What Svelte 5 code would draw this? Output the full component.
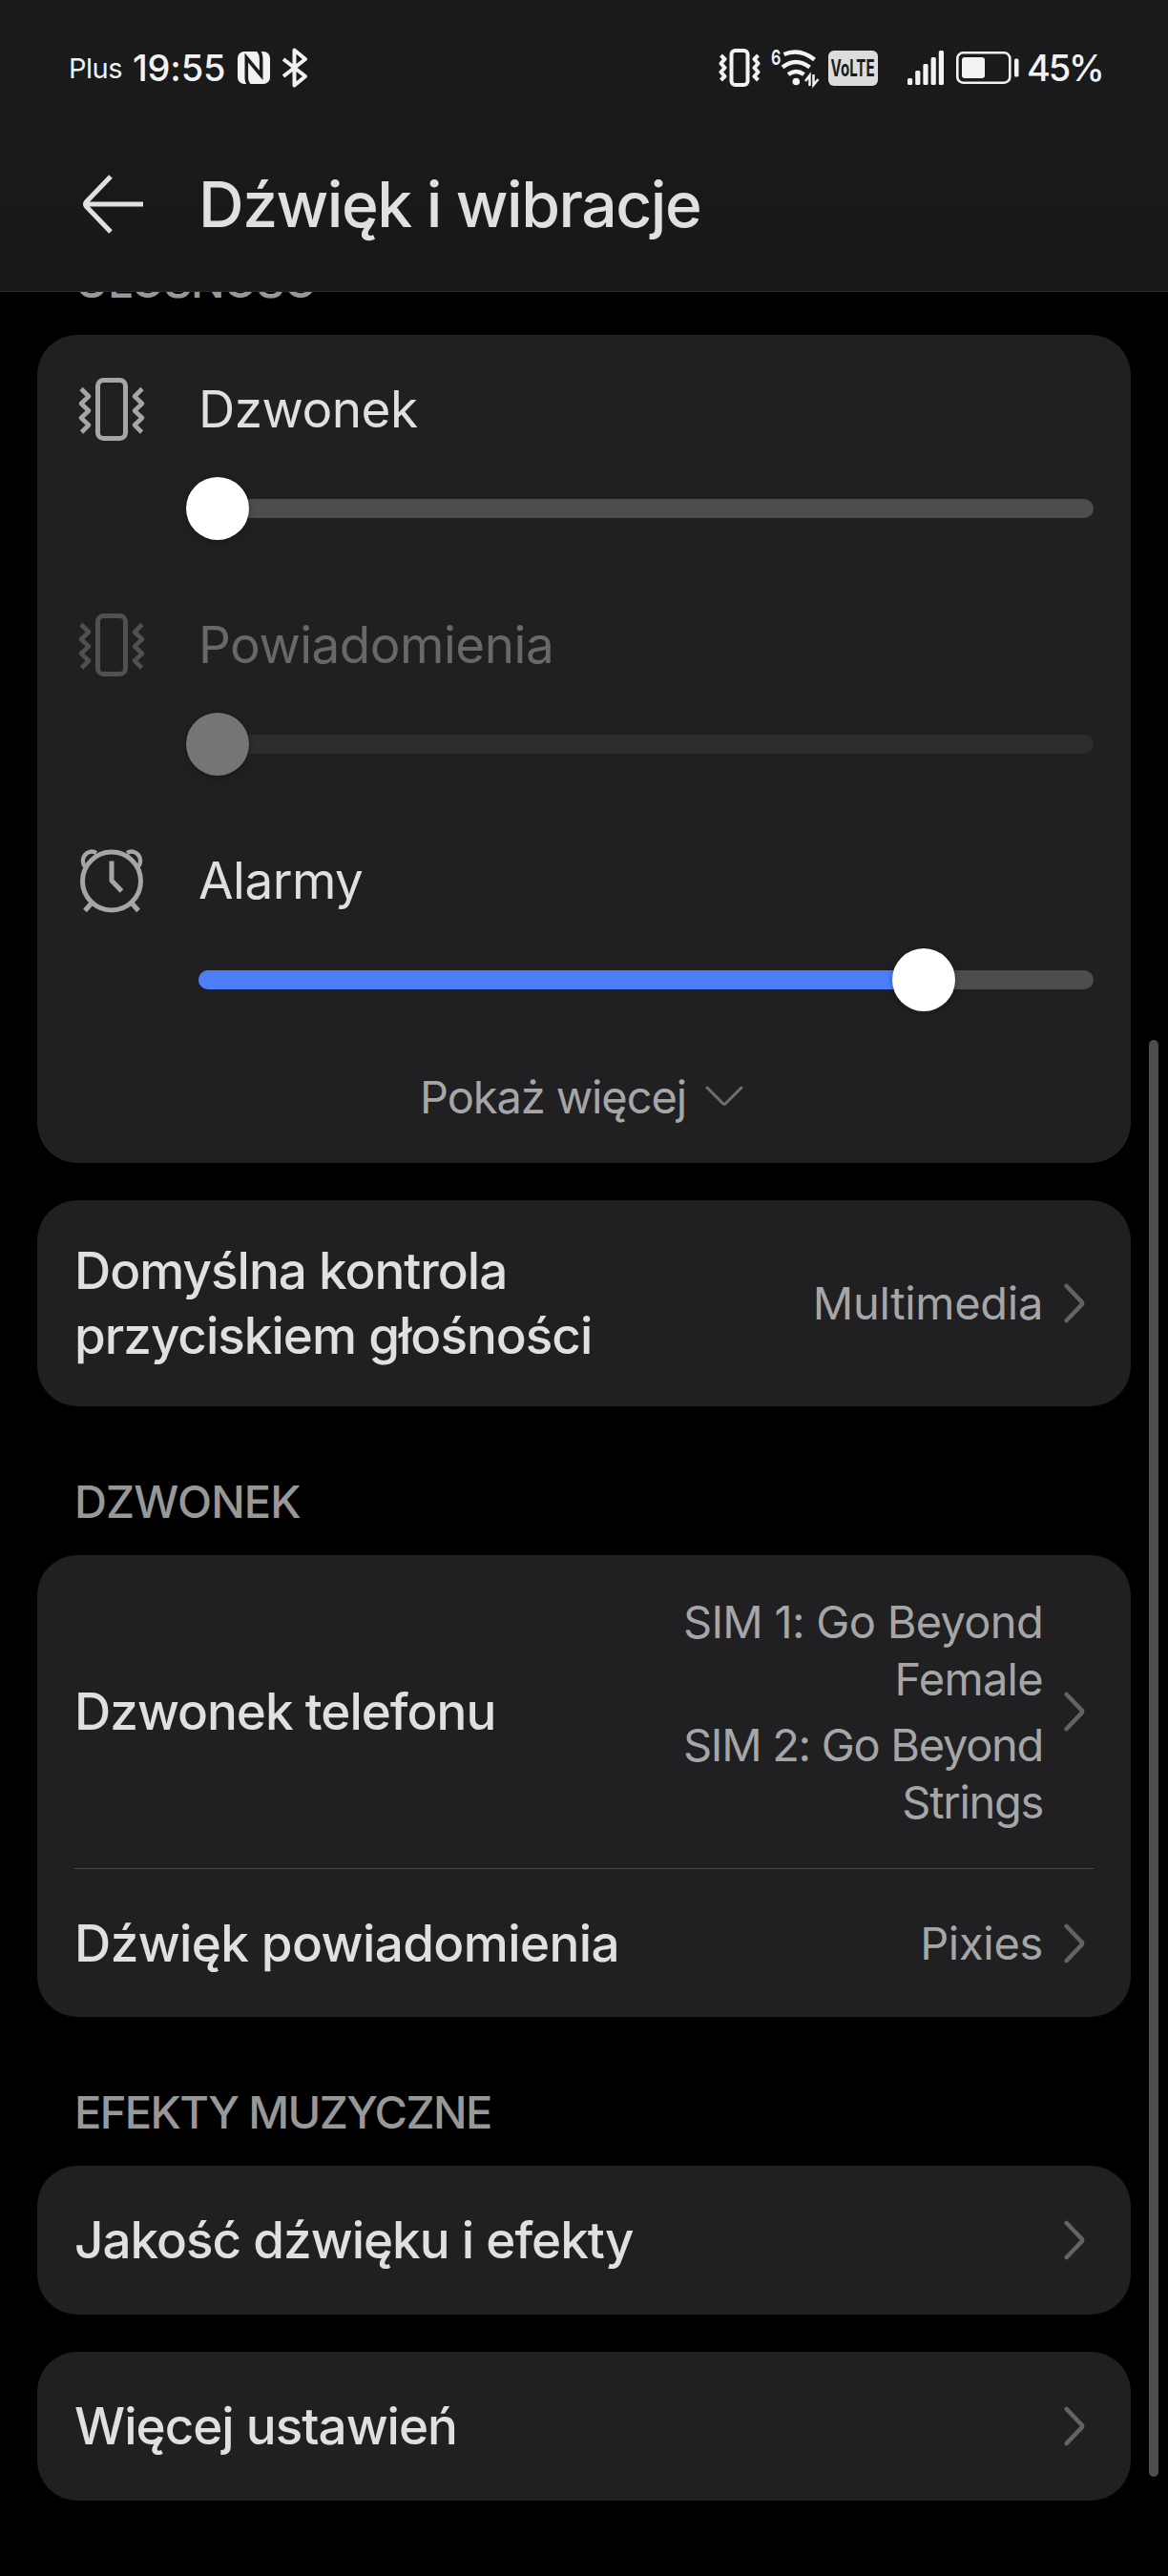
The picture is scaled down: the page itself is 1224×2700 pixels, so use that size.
<script>
  const sliders = [
    { name: 'Dzwonek', icon: 'vibrate', value: 0, disabled: false },
    { name: 'Powiadomienia', icon: 'vibrate', value: 0, disabled: true },
    { name: 'Alarmy', icon: 'alarm', value: 82.4, disabled: false },
  ];

  // Signal bar tops, from the lowest bar to the highest
  const bars = [29, 21, 14, 7, 0];
</script>

{#snippet vibrate()}
  <svg class="icon" viewBox="0 0 72 68" fill="none" stroke="currentColor" stroke-width="5">
    <rect x="21.5" y="3.5" width="29" height="61" rx="6" />
    <g stroke-width="4.6" stroke-linejoin="round">
      <path d="M4 12.500l8 8-8 7.500 8 7.500-8 7.500 8 7.500-7.500 7.500" />
      <path d="M68 12.500l-8 8 8 7.500-8 7.500 8 7.500-8 7.500 7.500 7.500" />
    </g>
  </svg>
{/snippet}

{#snippet alarm()}
  <svg class="icon" viewBox="0 0 72 68" fill="none" stroke="currentColor" stroke-width="5">
    <circle cx="36" cy="34.500" r="30.500" />
    <path d="M36 13.500v20.500l10.500 11" stroke-linejoin="round" />
    <path d="M15 57.500l-7 8M57 57.500l7 8" />
    <path d="M8 19.500C2 11.500 10-.5 20 5M64 19.500C70 11.500 62-.5 52 5" stroke-width="4.500" />
  </svg>
{/snippet}

{#snippet chevron()}
  <svg class="chevron" viewBox="0 0 22 42" fill="none" stroke="#636364" stroke-width="4.600" stroke-linecap="round">
    <path d="M2.700 3l15.300 16q2 2 0 4L2.700 39" />
  </svg>
{/snippet}

<div class="screen">
  <header>
    <div class="status">
      <span class="carrier">Plus</span>
      <span class="clock">19:55</span>
      <svg class="nfc" viewBox="0 0 34 34">
        <rect width="34" height="34" rx="7" fill="#f2f2f2" />
        <g fill="none" stroke="#1b1b1b" stroke-width="3.600">
          <path d="M12 35Q9.300 32 9.300 28V6.500L24.700 25V7Q24.700 2 21.500-1" />
        </g>
      </svg>
      <svg class="bluetooth" viewBox="0 0 28 42" fill="none" stroke="#f2f2f2" stroke-width="4" stroke-linejoin="round">
        <path d="M2 12l23 18-11.500 9.500V2.500L25 12 2 30" />
      </svg>

      <svg class="ringer" viewBox="0 0 44 40" fill="none" stroke="#f2f2f2" stroke-width="4">
        <rect x="13.500" y="2" width="17" height="36" rx="4" />
        <path d="M2.500 7l4 4-4 4.500 4 4.500-4 4.500 4 4.500-4 4" stroke-linejoin="round" />
        <path d="M41.500 7l-4 4 4 4.500-4 4.500 4 4.500-4 4.500 4 4" stroke-linejoin="round" />
      </svg>
      <svg class="wifi" viewBox="0 0 52 40">
        <text x="0" y="16.500" class="wifi-gen">6</text>
        <g fill="none" stroke="#f2f2f2" stroke-width="4.500">
          <path d="M13.500 6Q30-1 45.500 11.500" />
          <path d="M12 19.500Q26 8.500 40.500 19.500" />
          <path d="M18 27Q26 21 34.500 27" />
        </g>
        <circle cx="26.300" cy="34.500" r="3.800" fill="#f2f2f2" />
        <path d="M36 34l4.500-6v11M44.500 27v11l5-6" fill="none" stroke="#f2f2f2" stroke-width="2.500" />
      </svg>
      <span class="volte"><span>VoLTE</span></span>
      <svg class="signal" viewBox="0 0 38 36" fill="#f2f2f2">
        {#each bars as top, i}
          <rect x={i * 8.200} y={top} width="5.200" height={36 - top} rx="1.500" />
        {/each}
      </svg>
      <svg class="battery" viewBox="0 0 66 34">
        <rect x="1.300" y="1.300" width="55" height="31.400" rx="6" fill="none" stroke="#f2f2f2" stroke-width="2.600" />
        <rect x="6" y="6" width="24" height="22" rx="3" fill="#f2f2f2" />
        <rect x="61" y="7.500" width="4.500" height="19" rx="1.500" fill="#f2f2f2" />
      </svg>
      <span class="percent">45%</span>
    </div>

    <div class="titlebar">
      <svg class="back" viewBox="0 0 66 62" fill="none" stroke="#e0e0e0" stroke-width="5" stroke-linejoin="round">
        <path d="M64 31H4M30 2L4.500 28.500q-2 2.500 0 5L30 60" />
      </svg>
      <h1>Dźwięk i wibracje</h1>
    </div>
  </header>

  <main>
    <h2 class="scrolled tight">GŁOŚNOŚĆ</h2>
    <section class="card volumes">
      {#each sliders as s}
        <div class="volume" class:disabled={s.disabled}>
          {#if s.icon == 'alarm'}{@render alarm()}{:else}{@render vibrate()}{/if}
          <span class="volume-name">{s.name}</span>
          <div class="slider">
            <div class="track">
              {#if s.value > 0}<div class="fill" style="width: {s.value}%"></div>{/if}
            </div>
            <div class="rail"><div class="thumb" style="left: {s.value}%"></div></div>
          </div>
        </div>
      {/each}
      <div class="more">
        <span>Pokaż więcej</span>
        <svg viewBox="0 0 40 22" fill="none" stroke="#6f6f70" stroke-width="3" stroke-linecap="round">
          <path d="M2 2l16.500 16.500q1.500 1.500 3 0L38 2" />
        </svg>
      </div>
    </section>

    <section class="card control">
      <div class="row">
        <span class="label">Domyślna kontrola<br />przyciskiem głośności</span>
        <span class="value">Multimedia</span>
        {@render chevron()}
      </div>
    </section>

    <h2>DZWONEK</h2>
    <section class="card">
      <div class="row ringtone">
        <span class="label">Dzwonek telefonu</span>
        <div class="sims">
          <p class="value">SIM 1: Go Beyond<br />Female</p>
          <p class="value">SIM 2: Go Beyond<br />Strings</p>
        </div>
        {@render chevron()}
      </div>
      <div class="row divided">
        <span class="label loose">Dźwięk powiadomienia</span>
        <span class="value">Pixies</span>
        {@render chevron()}
      </div>
    </section>

    <h2 class="tight">EFEKTY MUZYCZNE</h2>
    <section class="card">
      <div class="row">
        <span class="label">Jakość dźwięku i efekty</span>
        {@render chevron()}
      </div>
    </section>
    <section class="card">
      <div class="row">
        <span class="label">Więcej ustawień</span>
        {@render chevron()}
      </div>
    </section>
  </main>

  <div class="scrollbar"></div>
</div>

<style>
  :global(body) {
    background: #000;
  }

  .screen {
    position: relative;
    width: 1224px;
    height: 2700px;
    overflow: hidden;
    background: #000;
    color: #e0e0e0;
    font-family: Inter, "Noto Sans", sans-serif;
  }

  h1, h2, p {
    margin: 0;
  }

  svg {
    display: block;
    flex: none;
  }

  header {
    box-sizing: border-box;
    height: 306px;
    border-bottom: 1px solid #2a2a2a;
    background: linear-gradient(#1b1b1b, #181818);
  }

  /* status bar */
  .status {
    display: flex;
    align-items: center;
    height: 142px;
    padding-left: 72px;
    color: #f2f2f2;
    white-space: nowrap;
  }

  .carrier {
    width: 67px;
    font-size: 29px;
    letter-spacing: -0.5px;
  }

  .clock {
    width: 110px;
    font-size: 38px;
    font-weight: 450;
    letter-spacing: -0.2px;
  }

  .nfc {
    width: 34px;
    height: 34px;
  }

  .bluetooth {
    width: 28px;
    height: 42px;
    margin-left: 12px;
  }

  .ringer {
    width: 44px;
    height: 40px;
    margin-left: 430px;
  }

  .wifi {
    width: 52px;
    height: 40px;
    margin-left: 11px;
    overflow: visible;
  }

  .wifi-gen {
    font-size: 22px;
    font-weight: 600;
    fill: #f2f2f2;
    transform: scaleX(0.74);
  }

  .volte {
    display: flex;
    align-items: center;
    justify-content: center;
    width: 52px;
    height: 37px;
    margin-left: 8px;
    border-radius: 6px;
    background: #dcdcdc;
    color: #1b1b1b;
    font-size: 24px;
    font-weight: 700;
  }

  .volte span {
    transform: scaleX(0.63);
  }

  .signal {
    width: 38px;
    height: 36px;
    margin-left: 31px;
  }

  .battery {
    width: 66px;
    height: 34px;
    margin-left: 13px;
  }

  .percent {
    margin-left: 8px;
    font-size: 38px;
    font-weight: 450;
    letter-spacing: -2.2px;
  }

  /* title bar */
  .titlebar {
    display: flex;
    align-items: center;
    height: 144px;
    padding-left: 86px;
  }

  .back {
    width: 66px;
    height: 62px;
  }

  h1 {
    margin-left: 56px;
    font-size: 66px;
    font-weight: 500;
    letter-spacing: -1.5px;
    white-space: nowrap;
  }

  main {
    height: 2394px;
    padding: 0 39px;
    overflow: hidden;
  }

  h2 {
    margin: 0 0 0 39px;
    padding: 70px 0 26px;
    color: #989898;
    font-size: 47px;
    font-weight: 500;
    line-height: 60px;
    letter-spacing: -0.9px;
  }

  h2.tight {
    letter-spacing: -1.6px;
  }

  /* pulled up so that it slides under the header */
  .scrolled {
    margin-top: -111px;
  }

  .card {
    border-radius: 42px;
    background: #202022;
  }

  .card + .card {
    margin-top: 39px;
  }

  /* volume sliders */
  .volumes {
    box-sizing: border-box;
    height: 868px;
    padding: 44px 39px 0 42px;
  }

  .volume {
    display: grid;
    grid-template-columns: 72px 1fr;
    grid-template-rows: 68px 140px;
    column-gap: 55px;
    height: 247px;
  }

  .icon {
    width: 72px;
    height: 68px;
    color: #a6a6a7;
  }

  .volume-name {
    font-size: 53px;
    line-height: 68px;
    letter-spacing: -0.5px;
  }

  .slider {
    grid-column: 2;
    align-self: center;
    position: relative;
  }

  .track {
    height: 20px;
    border-radius: 10px;
    overflow: hidden;
    background: #4d4d4d;
  }

  .fill {
    height: 20px;
    background: #4e7df8;
  }

  /* the thumb travels along an inset rail, 20px short at both ends */
  .rail {
    position: absolute;
    top: -23px;
    left: -13px;
    right: 53px;
  }

  .thumb {
    position: absolute;
    width: 66px;
    height: 66px;
    border-radius: 50%;
    background: #fff;
    box-shadow: 0 1px 6px rgba(0, 0, 0, 0.35);
  }

  .disabled .icon {
    color: #505051;
  }

  .disabled .volume-name {
    color: #686869;
  }

  .disabled .track {
    background: #2d2d2f;
  }

  .disabled .thumb {
    background: #757575;
  }

  .more {
    display: flex;
    align-items: center;
    margin: -17px 0 0 359px;
    height: 60px;
    color: #a6a6a7;
    font-size: 47px;
    letter-spacing: -1.1px;
  }

  .more svg {
    width: 40px;
    height: 22px;
    margin-left: 20px;
  }

  /* rows */
  .row {
    box-sizing: border-box;
    display: flex;
    align-items: center;
    min-height: 156px;
    padding: 0 48px 0 39px;
  }

  .control .row {
    height: 216px;
  }

  .ringtone {
    height: 328px;
  }

  .divided {
    margin: 0 39px;
    padding: 0 9px 0 0;
    border-top: 1px solid #4d4d4e;
  }

  .label {
    flex: 1;
    font-size: 53px;
    font-weight: 500;
    line-height: 68px;
    letter-spacing: -1px;
    white-space: nowrap;
  }

  .label.loose {
    letter-spacing: -0.6px;
  }

  .value {
    color: #a6a6a7;
    font-size: 47px;
    line-height: 60px;
    letter-spacing: -0.3px;
    text-align: right;
    white-space: nowrap;
  }

  .sims {
    display: grid;
    gap: 9px;
  }

  .sims .value {
    letter-spacing: -0.7px;
  }

  .sims .value + .value {
    letter-spacing: -1.3px;
  }

  .chevron {
    width: 22px;
    height: 42px;
    margin-left: 22px;
  }

  .scrollbar {
    position: absolute;
    top: 1090px;
    left: 1204px;
    width: 10px;
    height: 1506px;
    border-radius: 5px;
    background: #4d4d4d;
  }
</style>
